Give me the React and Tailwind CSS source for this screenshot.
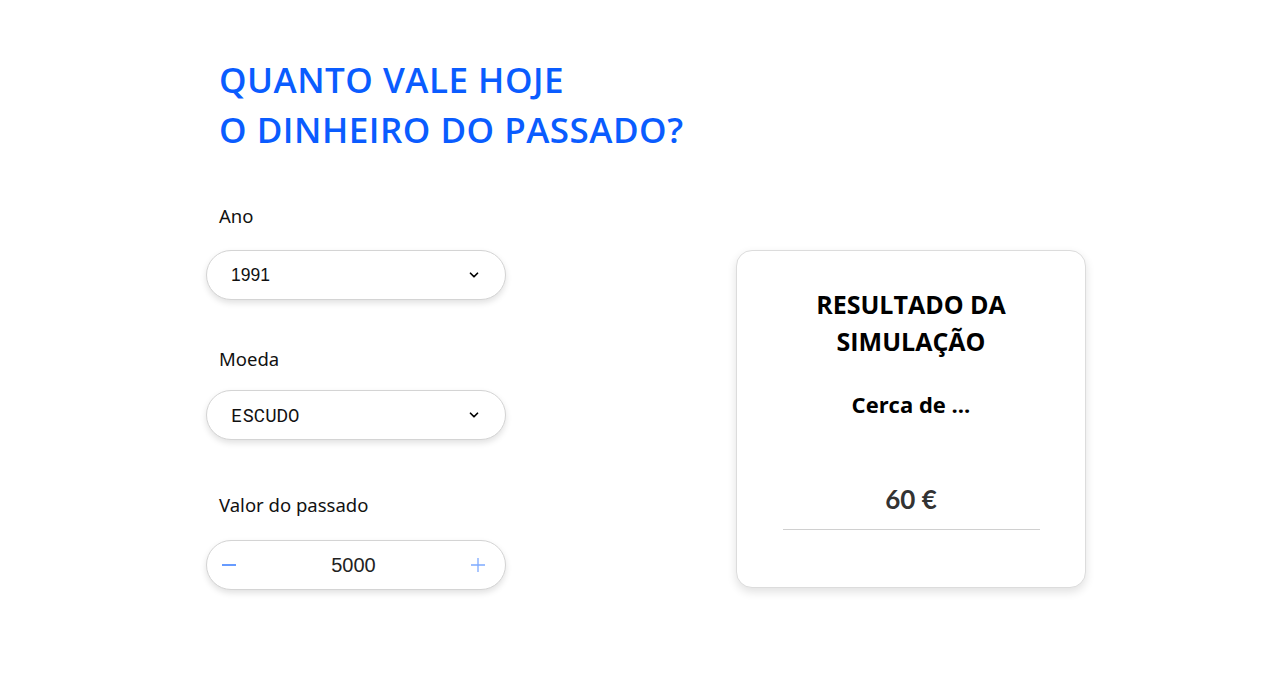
import { ChevronDown } from "lucide-react";

function Select({ value, mono }) {
  return (
    <div className="flex h-[50px] w-[300px] items-center justify-between rounded-full border border-[#d4d4d4] bg-white pl-6 pr-6 shadow-[0_3px_6px_rgba(0,0,0,0.12)]">
      <span
        className={`text-[#111] ${
          mono
            ? "font-['Roboto_Mono',Roboto,sans-serif] text-[19px]"
            : "font-['Liberation_Sans',Arial,sans-serif] text-[17.5px]"
        }`}
      >
        {value}
      </span>
      <ChevronDown size={14} strokeWidth={3} className="text-black" />
    </div>
  );
}

function Label({ children }) {
  return (
    <div className="pl-[13px] font-['Noto_Sans','Open_Sans',sans-serif] text-[18.5px] leading-[24px] text-[#111]">
      {children}
    </div>
  );
}

export default function App() {
  return (
    <main className="min-h-screen bg-white font-['Open_Sans',sans-serif]">
      <div className="ml-[206px] pt-[55px]">
        <h1 className="pl-[13px] text-[35px] font-semibold leading-[50px] tracking-[0.5px] text-[#0a5cff]">
          QUANTO VALE HOJE
          <br />
          O DINHEIRO DO PASSADO?
        </h1>

        <div className="mt-[49px] flex items-start">
          <div className="flex w-[300px] flex-col">
            <Label>Ano</Label>
            <div className="mt-[22px]">
              <Select value="1991" />
            </div>

            <div className="mt-[47px]">
              <Label>Moeda</Label>
            </div>
            <div className="mt-[19px]">
              <Select value="ESCUDO" mono />
            </div>

            <div className="mt-[53px]">
              <Label>Valor do passado</Label>
            </div>
            <div className="mt-[23px] flex h-[50px] w-[300px] items-center justify-between rounded-full border border-[#d4d4d4] bg-white pl-[14px] pr-[19px] shadow-[0_3px_6px_rgba(0,0,0,0.12)]">
              <svg width="16" height="16" viewBox="0 0 16 16">
                <path d="M1 8h14" stroke="#1565ff" strokeWidth="1.3" />
              </svg>
              <span className="font-['Liberation_Sans',Arial,sans-serif] text-[20px] text-[#222]">
                5000
              </span>
              <svg width="16" height="16" viewBox="0 0 16 16">
                <path d="M1 8h14M8 1v14" stroke="#7eaaff" strokeWidth="1.3" />
              </svg>
            </div>
          </div>

          <div className="ml-[230px] mt-[46px] flex h-[338px] w-[350px] flex-col items-center rounded-2xl border border-[#dcdcdc] bg-white shadow-[0_4px_10px_rgba(0,0,0,0.12)]">
            <h2 className="mt-[35px] text-center text-[25px] font-bold leading-[37px] text-black">
              RESULTADO DA
              <br />
              SIMULAÇÃO
            </h2>
            <p className="mt-[28px] text-[22px] font-bold text-black">Cerca de ...</p>
            <p className="mt-[59px] font-['Lato',sans-serif] text-[26px] font-bold text-[#333]">
              60 €
            </p>
            <div className="mt-[10px] h-px w-[257px] bg-[#d0d0d0]" />
          </div>
        </div>
      </div>
    </main>
  );
}
